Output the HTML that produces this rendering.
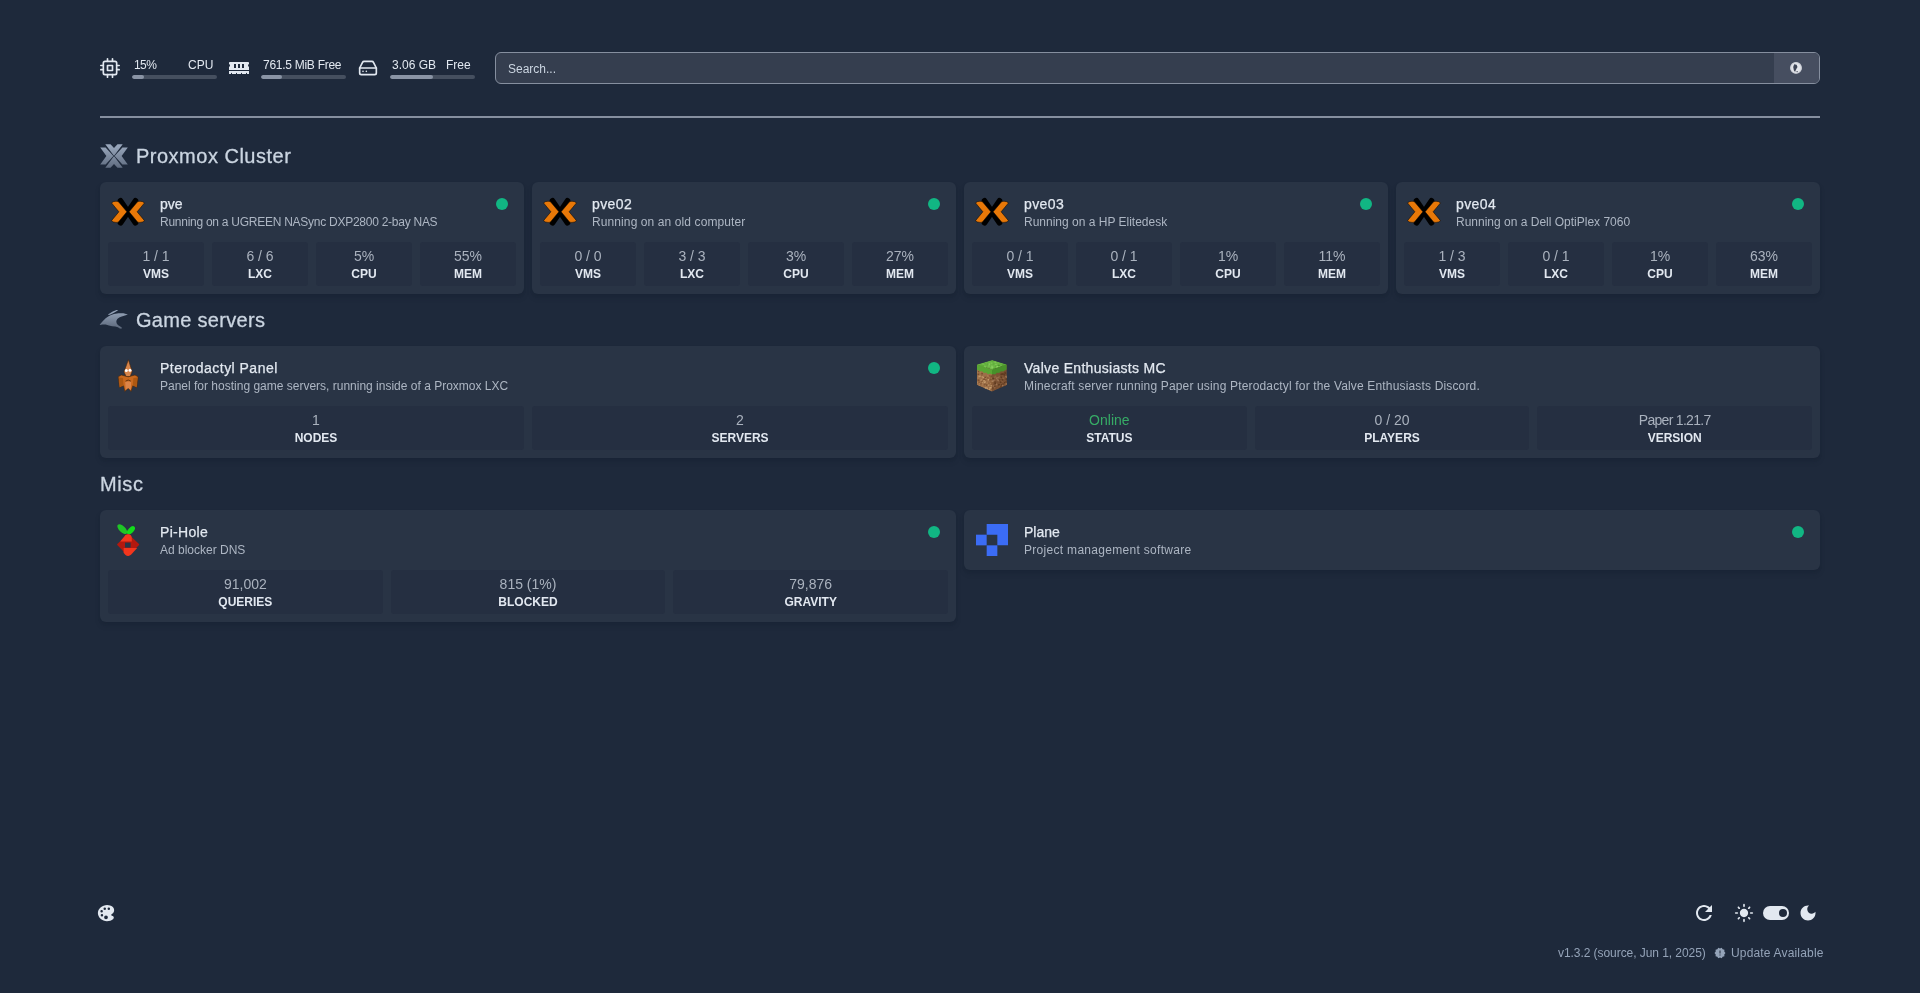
<!DOCTYPE html>
<html><head><meta charset="utf-8">
<style>
*{box-sizing:border-box;margin:0;padding:0}
html,body{will-change:transform;width:1920px;height:993px;overflow:hidden;background:#1e293b;font-family:"Liberation Sans",sans-serif;color:#e2e8f0}
.abs{position:absolute}
.res-ic{position:absolute;width:20px;height:20px}
.res-t{position:absolute;font-size:12px;line-height:16px;color:#e2e8f0;white-space:nowrap}
.bar{position:absolute;height:4px;border-radius:9999px;background:#454f5f;overflow:hidden}
.bar i{display:block;height:100%;background:#8a94a5;border-radius:9999px}
.search{position:absolute;left:495px;top:52px;width:1325px;height:32px;border:1px solid #868f9f;border-radius:6px;background:#353e4f;overflow:hidden}
.search .ph{position:absolute;left:12px;top:8px;font-size:12px;line-height:16px;color:#cbd5e1}
.search .btn{position:absolute;right:0;top:0;width:45px;height:100%;background:#464e60}
.hr{position:absolute;left:100px;top:116px;width:1720px;height:2px;background:#868f9f}
.gtitle{position:absolute;font-size:20px;line-height:28px;color:#cbd5e1;white-space:nowrap;-webkit-text-stroke:0.3px #cbd5e1}
.gicon{position:absolute;width:28px;height:28px}
.card{position:absolute;background:#293445;border-radius:6px;box-shadow:0 4px 6px -1px rgba(15,23,42,.2),0 2px 4px -2px rgba(15,23,42,.2)}
.card .ic{position:absolute;left:4px;top:4px;width:48px;height:52px;display:flex;align-items:center;justify-content:center}
.card .nm{position:absolute;left:60px;top:12px;font-size:14px;line-height:20px;color:#e2e8f0;white-space:nowrap;-webkit-text-stroke:0.25px #e2e8f0}
.card .ds{position:absolute;left:60px;top:32px;font-size:12px;line-height:16px;color:#adb6c3;white-space:nowrap}
.card .dot{position:absolute;right:16px;top:16px;width:12px;height:12px;border-radius:50%;background:#11b683}
.blocks{position:absolute;left:4px;right:4px;top:56px;display:flex}
.blk{flex:1;margin:4px;height:44px;background:#252f41;border-radius:3px;text-align:center;padding-top:4px}
.blk .v{font-size:14px;line-height:20px;color:#aab2be;white-space:nowrap}
.blk .l{font-size:12px;line-height:16px;font-weight:bold;color:#e2e8f0;text-transform:uppercase;white-space:nowrap}
.foot{position:absolute;font-size:12px;line-height:16px;color:#94a3b8;white-space:nowrap}
</style></head>
<body>
<!-- resources -->
<svg class="res-ic" style="left:100px;top:58px;width:20px;height:20px" viewBox="0 0 24 24" fill="none" stroke="#e2e8f0" stroke-width="2" stroke-linecap="round" stroke-linejoin="round"><rect x="4" y="4" width="16" height="16" rx="2"/><rect x="9" y="9" width="6" height="6"/><path d="M9 1v3M15 1v3M9 20v3M15 20v3M20 9h3M20 14h3M1 9h3M1 14h3"/></svg>
<div class="res-t" style="left:134px;top:57px;letter-spacing:-0.6px">15%</div>
<div class="res-t" style="left:188px;top:57px">CPU</div>
<div class="bar" style="left:132px;top:75px;width:85px"><i style="width:14%"></i></div>

<svg class="res-ic" style="left:229px;top:58px;width:20px;height:20px" viewBox="0 0 640 512" fill="#e2e8f0"><path d="M640 130.94V96c0-17.67-14.330-32-32-32H32C14.33 64 0 78.33 0 96v34.94c18.6 6.61 32 24.19 32 45.06s-13.4 38.45-32 45.06V320h640v-98.94c-18.6-6.61-32-24.19-32-45.06s13.4-38.45 32-45.06zM224 256h-64V128h64v128zm128 0h-64V128h64v128zm128 0h-64V128h64v128zM0 448h64v-26.67c0-8.84 7.16-16 16-16s16 7.160 16 16V448h128v-26.67c0-8.84 7.16-16 16-16s16 7.16 16 16V448h128v-26.67c0-8.840 7.16-16 16-16s16 7.16 16 16V448h128v-26.67c0-8.84 7.16-16 16-16s16 7.16 16 16V448h64v-96H0v96z"/></svg>
<div class="res-t" style="left:263px;top:57px;letter-spacing:-0.27px">761.5 MiB Free</div>
<div class="bar" style="left:261px;top:75px;width:85px"><i style="width:25%"></i></div>

<svg class="res-ic" style="left:358px;top:58px;width:20px;height:20px" viewBox="0 0 24 24" fill="none" stroke="#e2e8f0" stroke-width="2" stroke-linecap="round" stroke-linejoin="round"><path d="M22 12H2"/><path d="M5.45 5.11L2 12v6a2 2 0 0 0 2 2h16a2 2 0 0 0 2-2v-6l-3.45-6.89A2 2 0 0 0 16.76 4H7.24a2 2 0 0 0-1.79 1.11z"/><path d="M6 16h.01M10 16h.01"/></svg>
<div class="res-t" style="left:392px;top:57px">3.06 GB</div>
<div class="res-t" style="left:446px;top:57px">Free</div>
<div class="bar" style="left:390px;top:75px;width:85px"><i style="width:51%"></i></div>

<div class="search"><div class="ph">Search...</div><div class="btn"></div></div>
<div class="hr"></div>

<svg width="0" height="0" style="position:absolute">
<defs>
<linearGradient id="gg" gradientUnits="userSpaceOnUse" x1="0" y1="2" x2="0" y2="25"><stop offset="0" stop-color="#98a6bb"/><stop offset="1" stop-color="#5d697d"/></linearGradient>
<g id="pvshape">
<path d="M0.2 3.5H5.6L13.6 12L5.6 20.5H0.2L6.4 12Z"/>
<path d="M27.8 3.5H22.4L14.4 12L22.4 20.5H27.8L21.6 12Z"/>
</g>
<g id="pvx">
<path d="M14.5 8.8L29.5 30.8M29.5 8.8L14.5 30.8" stroke="#000" stroke-width="5.6" stroke-linecap="round"/>
<path fill="#e87808" stroke="#000" stroke-width="0.5" d="M5.5 10.9Q7.3 9.1 10.1 9.3Q11.6 9.4 12.5 9.8L20.9 19.8L12.5 29.9Q11.6 30.4 10.1 30.4Q7.3 30.5 5.5 28.7L12.9 19.8Z"/>
<path fill="#e87808" stroke="#000" stroke-width="0.5" d="M38.5 10.9Q36.7 9.1 33.9 9.3Q32.4 9.4 31.5 9.8L23.1 19.8L31.5 29.9Q32.4 30.4 33.9 30.4Q36.7 30.5 38.5 28.7L31.1 19.8Z"/>
</g>
<g id="pvgray" fill="url(#gg)">
<path d="M5.3 0.3H10.5L14 4.1L17.5 0.3H22.7L14.3 11.6H13.7Z"/>
<path d="M5.3 23.7H10.5L14 19.9L17.5 23.7H22.7L14.3 12.4H13.7Z"/>
<path d="M0.2 3.5H5.6L13.4 12L5.6 20.5H0.2L6.4 12Z"/>
<path d="M27.8 3.5H22.4L14.6 12L22.4 20.5H27.8L21.6 12Z"/>
</g>
<g id="ptgray" fill="url(#gg2)">
<path d="M3.87 20.60 L6.45 17.40 L9.67 14.20 L12.20 12.60 L14.50 11.30 L18.00 10.00 L22.60 9.20 L27.40 9.30 L30.00 10.00 L31.90 10.60 L29.00 11.60 L25.80 12.60 L23.20 13.50 L21.30 15.10 L20.30 17.10 L20.60 19.30 L21.90 20.90 L23.80 22.20 L25.80 23.50 L25.50 24.80 L23.80 24.50 L21.90 23.20 L19.30 22.60 L16.10 22.20 L12.90 21.60 L9.67 20.60 L6.45 20.60 L3.87 20.90Z"/>
<path d="M11.90 10.60 L16.80 7.40 L20.60 6.10 L22.20 6.00 L20.90 7.10 L18.00 8.70 L15.10 10.30 L13.00 11.00Z"/>
</g>
<linearGradient id="gg2" gradientUnits="userSpaceOnUse" x1="0" y1="6" x2="0" y2="25"><stop offset="0" stop-color="#9aa8bd"/><stop offset="1" stop-color="#5a6679"/></linearGradient>
<g id="ptero" stroke-linejoin="round">
<path fill="#c9691f" stroke="#4a2508" stroke-width="0.6" d="M10.2 24.8L13.3 23L20.2 24.8L27 23L30.1 24.8L28.8 35.4L24.8 33.7L23 39.4L20.2 36.3L16.8 39.4L15.5 33.7L11.5 35.4Z"/>
<path fill="#ad5812" d="M10.8 25.5L15 26L15.5 33.5L11.6 35Z M29.5 25.5L25.4 26L24.8 33.5L28.6 35Z"/>
<path fill="#dc8448" d="M17.2 29.5L23.2 29.5L22.8 38L20.2 36L17.6 38Z"/>
<path fill="none" stroke="#5a2e0c" stroke-width="0.9" d="M17.5 29.2Q20.2 26.8 22.9 29.2"/>
<path fill="#d8854a" stroke="#4a2508" stroke-width="0.6" d="M20.4 7.75L24.1 19.5L22.2 24.5L18.2 24.5L15.9 19.9Z"/>
<circle cx="18.3" cy="18.6" r="1.5" fill="#fff"/><circle cx="22" cy="18.3" r="1.5" fill="#fff"/>
</g>
<g id="mc">
<clipPath id="mcclip"><path d="M1 4.4L16.2 0L30.8 4.4V25L16 31.7L1 25Z"/></clipPath>
<g clip-path="url(#mcclip)">
<path fill="#6ab444" d="M1 4.4L16.2 0L30.8 4.4L16 9.5Z"/>
<path fill="#9d7049" d="M1 4.4L16 9.5V31.7L1 25Z"/>
<path fill="#7b5133" d="M16 9.5L30.8 4.4V25L16 31.7Z"/>
<rect x="4.6" y="19.4" width="1.6" height="1.6" fill="#c49a6c"/><rect x="14.7" y="21.9" width="1.6" height="1.6" fill="#a87a50"/><rect x="2.0" y="11.1" width="1.6" height="1.6" fill="#7a4e2e"/><rect x="4.9" y="15.2" width="1.6" height="1.6" fill="#7a4e2e"/><rect x="9.1" y="21.0" width="1.6" height="1.6" fill="#7a4e2e"/><rect x="10.6" y="15.9" width="1.6" height="1.6" fill="#8a5c38"/><rect x="14.0" y="22.3" width="1.6" height="1.6" fill="#b58a5e"/><rect x="11.1" y="14.9" width="1.6" height="1.6" fill="#a87a50"/><rect x="1.6" y="21.7" width="1.6" height="1.6" fill="#c49a6c"/><rect x="8.1" y="23.1" width="1.6" height="1.6" fill="#7a4e2e"/><rect x="11.7" y="27.1" width="1.6" height="1.6" fill="#7a4e2e"/><rect x="11.9" y="22.4" width="1.6" height="1.6" fill="#8a5c38"/><rect x="14.2" y="16.4" width="1.6" height="1.6" fill="#8a5c38"/><rect x="8.4" y="16.7" width="1.6" height="1.6" fill="#7a4e2e"/><rect x="12.7" y="26.5" width="1.6" height="1.6" fill="#7a4e2e"/><rect x="8.6" y="18.6" width="1.6" height="1.6" fill="#c49a6c"/><rect x="9.0" y="19.0" width="1.6" height="1.6" fill="#8a5c38"/><rect x="14.6" y="24.7" width="1.6" height="1.6" fill="#b58a5e"/><rect x="13.8" y="28.8" width="1.6" height="1.6" fill="#8a5c38"/><rect x="11.5" y="18.7" width="1.6" height="1.6" fill="#a87a50"/><rect x="14.6" y="23.2" width="1.6" height="1.6" fill="#8a5c38"/><rect x="10.5" y="27.6" width="1.6" height="1.6" fill="#c49a6c"/><rect x="5.3" y="12.9" width="1.6" height="1.6" fill="#7a4e2e"/><rect x="2.3" y="22.2" width="1.6" height="1.6" fill="#7a4e2e"/><rect x="14.5" y="15.4" width="1.6" height="1.6" fill="#7a4e2e"/><rect x="12.5" y="26.7" width="1.6" height="1.6" fill="#b58a5e"/><rect x="10.1" y="24.3" width="1.6" height="1.6" fill="#7a4e2e"/><rect x="11.8" y="18.9" width="1.6" height="1.6" fill="#c49a6c"/><rect x="8.6" y="27.1" width="1.6" height="1.6" fill="#c49a6c"/><rect x="1.1" y="12.1" width="1.6" height="1.6" fill="#a87a50"/><rect x="1.5" y="13.5" width="1.6" height="1.6" fill="#7a4e2e"/><rect x="5.4" y="15.8" width="1.6" height="1.6" fill="#b58a5e"/><rect x="15.7" y="20.3" width="1.6" height="1.6" fill="#c49a6c"/><rect x="15.4" y="28.0" width="1.6" height="1.6" fill="#7a4e2e"/><rect x="6.7" y="24.7" width="1.6" height="1.6" fill="#7a4e2e"/><rect x="10.7" y="22.2" width="1.6" height="1.6" fill="#a87a50"/><rect x="2.5" y="24.7" width="1.6" height="1.6" fill="#a87a50"/><rect x="5.1" y="20.8" width="1.6" height="1.6" fill="#8a5c38"/><rect x="15.0" y="21.5" width="1.6" height="1.6" fill="#c49a6c"/><rect x="8.8" y="20.9" width="1.6" height="1.6" fill="#b58a5e"/><rect x="12.8" y="28.4" width="1.6" height="1.6" fill="#c49a6c"/><rect x="1.3" y="19.3" width="1.6" height="1.6" fill="#8a5c38"/><rect x="1.9" y="19.7" width="1.6" height="1.6" fill="#7a4e2e"/><rect x="6.3" y="25.2" width="1.6" height="1.6" fill="#a87a50"/><rect x="11.6" y="24.5" width="1.6" height="1.6" fill="#b58a5e"/><rect x="9.8" y="27.0" width="1.6" height="1.6" fill="#b58a5e"/><rect x="15.4" y="19.0" width="1.6" height="1.6" fill="#7a4e2e"/><rect x="5.5" y="20.5" width="1.6" height="1.6" fill="#8a5c38"/><rect x="6.5" y="16.8" width="1.6" height="1.6" fill="#c49a6c"/><rect x="13.7" y="18.6" width="1.6" height="1.6" fill="#7a4e2e"/><rect x="2.6" y="22.5" width="1.6" height="1.6" fill="#a87a50"/><rect x="11.3" y="15.9" width="1.6" height="1.6" fill="#a87a50"/><rect x="4.3" y="23.0" width="1.6" height="1.6" fill="#8a5c38"/><rect x="5.9" y="21.8" width="1.6" height="1.6" fill="#b58a5e"/><rect x="2.5" y="15.6" width="1.6" height="1.6" fill="#c49a6c"/><rect x="11.1" y="17.2" width="1.6" height="1.6" fill="#8a5c38"/><rect x="2.2" y="21.4" width="1.6" height="1.6" fill="#8a5c38"/><rect x="14.3" y="21.4" width="1.6" height="1.6" fill="#8a5c38"/><rect x="12.8" y="15.1" width="1.6" height="1.6" fill="#8a5c38"/><rect x="5.7" y="23.9" width="1.6" height="1.6" fill="#a87a50"/><rect x="3.8" y="15.4" width="1.6" height="1.6" fill="#b58a5e"/><rect x="13.1" y="19.5" width="1.6" height="1.6" fill="#8a5c38"/><rect x="7.3" y="20.0" width="1.6" height="1.6" fill="#c49a6c"/><rect x="8.0" y="21.8" width="1.6" height="1.6" fill="#c49a6c"/><rect x="7.3" y="18.5" width="1.6" height="1.6" fill="#7a4e2e"/><rect x="3.3" y="11.4" width="1.6" height="1.6" fill="#a87a50"/><rect x="15.8" y="21.7" width="1.6" height="1.6" fill="#8a5c38"/><rect x="1.5" y="17.1" width="1.6" height="1.6" fill="#a87a50"/><rect x="15.5" y="23.1" width="1.6" height="1.6" fill="#8a5c38"/><rect x="13.9" y="27.0" width="1.6" height="1.6" fill="#c49a6c"/><rect x="17.8" y="19.2" width="1.6" height="1.6" fill="#8e6240"/><rect x="29.4" y="21.0" width="1.6" height="1.6" fill="#6a4226"/><rect x="29.3" y="23.9" width="1.6" height="1.6" fill="#8e6240"/><rect x="16.2" y="27.3" width="1.6" height="1.6" fill="#6a4226"/><rect x="23.4" y="16.9" width="1.6" height="1.6" fill="#8e6240"/><rect x="23.8" y="19.3" width="1.6" height="1.6" fill="#8e6240"/><rect x="21.1" y="18.0" width="1.6" height="1.6" fill="#5e3a20"/><rect x="28.0" y="12.5" width="1.6" height="1.6" fill="#6a4226"/><rect x="18.9" y="23.0" width="1.6" height="1.6" fill="#8e6240"/><rect x="18.5" y="27.0" width="1.6" height="1.6" fill="#6a4226"/><rect x="28.2" y="11.7" width="1.6" height="1.6" fill="#5e3a20"/><rect x="16.7" y="20.0" width="1.6" height="1.6" fill="#9c7150"/><rect x="25.1" y="20.2" width="1.6" height="1.6" fill="#8e6240"/><rect x="23.0" y="24.9" width="1.6" height="1.6" fill="#8e6240"/><rect x="28.7" y="22.4" width="1.6" height="1.6" fill="#8e6240"/><rect x="17.8" y="16.5" width="1.6" height="1.6" fill="#8e6240"/><rect x="28.6" y="12.6" width="1.6" height="1.6" fill="#5e3a20"/><rect x="20.7" y="19.1" width="1.6" height="1.6" fill="#9c7150"/><rect x="21.7" y="19.7" width="1.6" height="1.6" fill="#9c7150"/><rect x="21.3" y="17.0" width="1.6" height="1.6" fill="#9c7150"/><rect x="22.3" y="15.7" width="1.6" height="1.6" fill="#8e6240"/><rect x="26.6" y="17.6" width="1.6" height="1.6" fill="#8e6240"/><rect x="24.4" y="13.6" width="1.6" height="1.6" fill="#5e3a20"/><rect x="24.9" y="24.1" width="1.6" height="1.6" fill="#5e3a20"/><rect x="25.4" y="13.3" width="1.6" height="1.6" fill="#5e3a20"/><rect x="16.8" y="25.3" width="1.6" height="1.6" fill="#9c7150"/><rect x="22.2" y="24.0" width="1.6" height="1.6" fill="#5e3a20"/><rect x="16.3" y="19.4" width="1.6" height="1.6" fill="#9c7150"/><rect x="26.3" y="13.3" width="1.6" height="1.6" fill="#5e3a20"/><rect x="19.3" y="16.9" width="1.6" height="1.6" fill="#8e6240"/><rect x="29.9" y="16.3" width="1.6" height="1.6" fill="#9c7150"/><rect x="17.8" y="25.8" width="1.6" height="1.6" fill="#5e3a20"/><rect x="25.9" y="23.0" width="1.6" height="1.6" fill="#8e6240"/><rect x="28.0" y="21.9" width="1.6" height="1.6" fill="#5e3a20"/><rect x="18.1" y="26.9" width="1.6" height="1.6" fill="#8e6240"/><rect x="23.8" y="21.4" width="1.6" height="1.6" fill="#5e3a20"/><rect x="18.7" y="15.5" width="1.6" height="1.6" fill="#8e6240"/><rect x="16.4" y="17.8" width="1.6" height="1.6" fill="#5e3a20"/><rect x="28.4" y="25.1" width="1.6" height="1.6" fill="#9c7150"/><rect x="27.8" y="12.2" width="1.6" height="1.6" fill="#6a4226"/><rect x="17.6" y="26.8" width="1.6" height="1.6" fill="#8e6240"/><rect x="24.1" y="25.7" width="1.6" height="1.6" fill="#6a4226"/><rect x="28.3" y="15.0" width="1.6" height="1.6" fill="#6a4226"/><rect x="25.6" y="19.1" width="1.6" height="1.6" fill="#5e3a20"/><rect x="19.7" y="23.7" width="1.6" height="1.6" fill="#9c7150"/><rect x="24.2" y="27.1" width="1.6" height="1.6" fill="#5e3a20"/><rect x="23.4" y="27.6" width="1.6" height="1.6" fill="#5e3a20"/><rect x="28.5" y="25.2" width="1.6" height="1.6" fill="#5e3a20"/><rect x="26.2" y="23.2" width="1.6" height="1.6" fill="#5e3a20"/><rect x="18.3" y="21.3" width="1.6" height="1.6" fill="#6a4226"/><rect x="18.4" y="22.7" width="1.6" height="1.6" fill="#5e3a20"/><rect x="29.6" y="18.4" width="1.6" height="1.6" fill="#5e3a20"/><rect x="24.7" y="25.3" width="1.6" height="1.6" fill="#6a4226"/><rect x="20.0" y="17.6" width="1.6" height="1.6" fill="#9c7150"/><rect x="29.8" y="23.0" width="1.6" height="1.6" fill="#9c7150"/><rect x="25.9" y="24.8" width="1.6" height="1.6" fill="#9c7150"/><rect x="29.2" y="15.6" width="1.6" height="1.6" fill="#9c7150"/><rect x="23.1" y="19.1" width="1.6" height="1.6" fill="#6a4226"/><rect x="24.4" y="16.5" width="1.6" height="1.6" fill="#5e3a20"/><rect x="27.5" y="13.9" width="1.6" height="1.6" fill="#5e3a20"/><rect x="14.7" y="2.4" width="1.8" height="1.4" fill="#7cc653"/><rect x="19.0" y="6.0" width="1.8" height="1.4" fill="#5fae3a"/><rect x="26.0" y="5.5" width="1.8" height="1.4" fill="#7cc653"/><rect x="11.5" y="3.5" width="1.8" height="1.4" fill="#4e9a2c"/><rect x="22.4" y="5.5" width="1.8" height="1.4" fill="#7cc653"/><rect x="28.2" y="4.5" width="1.8" height="1.4" fill="#4e9a2c"/><rect x="26.0" y="4.4" width="1.8" height="1.4" fill="#4e9a2c"/><rect x="14.3" y="7.2" width="1.8" height="1.4" fill="#7cc653"/><rect x="18.5" y="1.7" width="1.8" height="1.4" fill="#7cc653"/><rect x="12.0" y="5.2" width="1.8" height="1.4" fill="#7cc653"/><rect x="6.7" y="5.2" width="1.8" height="1.4" fill="#8ad35f"/><rect x="8.2" y="6.5" width="1.8" height="1.4" fill="#8ad35f"/><rect x="6.1" y="6.1" width="1.8" height="1.4" fill="#5fae3a"/><rect x="7.9" y="3.1" width="1.8" height="1.4" fill="#5fae3a"/><rect x="15.0" y="5.5" width="1.8" height="1.4" fill="#7cc653"/><rect x="15.6" y="0.9" width="1.8" height="1.4" fill="#5fae3a"/><rect x="15.8" y="8.4" width="1.8" height="1.4" fill="#8ad35f"/><rect x="16.4" y="8.8" width="1.8" height="1.4" fill="#8ad35f"/><rect x="16.8" y="3.3" width="1.8" height="1.4" fill="#5fae3a"/><rect x="15.5" y="6.5" width="1.8" height="1.4" fill="#8ad35f"/><rect x="16.6" y="8.7" width="1.8" height="1.4" fill="#8ad35f"/><rect x="19.2" y="4.2" width="1.8" height="1.4" fill="#7cc653"/><rect x="18.7" y="4.1" width="1.8" height="1.4" fill="#7cc653"/><rect x="22.0" y="4.7" width="1.8" height="1.4" fill="#4e9a2c"/><rect x="21.6" y="5.3" width="1.8" height="1.4" fill="#4e9a2c"/><rect x="16.9" y="8.2" width="1.8" height="1.4" fill="#5fae3a"/><rect x="16.7" y="8.6" width="1.8" height="1.4" fill="#4e9a2c"/><rect x="24.5" y="3.6" width="1.8" height="1.4" fill="#5fae3a"/><rect x="19.0" y="5.3" width="1.8" height="1.4" fill="#5fae3a"/><rect x="19.9" y="6.3" width="1.8" height="1.4" fill="#7cc653"/><rect x="5.3" y="4.9" width="1.8" height="1.4" fill="#5fae3a"/><rect x="10.4" y="4.2" width="1.8" height="1.4" fill="#5fae3a"/><rect x="3.8" y="4.9" width="1.8" height="1.4" fill="#5fae3a"/><rect x="12.3" y="3.4" width="1.8" height="1.4" fill="#8ad35f"/><rect x="28.3" y="5.4" width="1.8" height="1.4" fill="#5fae3a"/><rect x="20.7" y="6.0" width="1.8" height="1.4" fill="#8ad35f"/><rect x="23.3" y="7.3" width="1.8" height="1.4" fill="#4e9a2c"/><rect x="6.6" y="3.7" width="1.8" height="1.4" fill="#7cc653"/><rect x="23.0" y="6.6" width="1.8" height="1.4" fill="#7cc653"/><rect x="6.6" y="4.6" width="1.8" height="1.4" fill="#5fae3a"/>
<path fill="#59a634" d="M1 4.4L16 9.5V14.5L14 13.5L12 14.2L10 12.6L8 13L6 11.2L4 11.6L2.5 10L1 10.2Z"/>
<path fill="#47902a" d="M16 9.5L30.8 4.4V9.6L29 10.2L27 11.5L25 11.2L23 13L21 12.8L19 14.5L17.5 14L16 14.5Z"/>
</g></g>
<g id="pihole">
<ellipse cx="10.3" cy="5.1" rx="3.1" ry="6.2" transform="rotate(-45 10.3 5.1)" fill="#1fc526"/>
<ellipse cx="18.9" cy="6.3" rx="2.7" ry="5" transform="rotate(45 18.9 6.3)" fill="#12dc1a"/>
<path fill="#b3190f" stroke="#b3190f" stroke-width="2.2" stroke-linejoin="round" d="M16.2 11.4L26 20.6L16.2 30.8L6.3 20.6Z"/>
<path fill="#f2361d" d="M15.5 10.3C18.2 10 19.8 11.6 19.8 14.2V17.4H8.2L12.5 12.2C13.3 11 14.3 10.4 15.5 10.3Z"/>
<path fill="#f2361d" d="M11.6 24.1H25.2L19 30.8C17.5 32.3 15 32.3 13.5 30.9L11.6 28.8Z"/>
<rect x="13" y="18.6" width="5.6" height="5" fill="#2a3446"/>
</g>
<g id="plane" fill="#3b6cf5">
<rect x="0" y="10.67" width="10.67" height="10.67"/>
<path d="M10.67 0H32V21.33H21.33V10.67H10.67Z"/>
<rect x="10.67" y="21.33" width="10.67" height="10.67"/>
</g>
</defs></svg>
<svg class="abs" style="left:1790px;top:62px" width="12" height="12" viewBox="0 0 12 12"><circle cx="6" cy="5.9" r="5.9" fill="#e4e6eb"/><circle cx="6" cy="5.9" r="5.2" fill="none" stroke="#b9bdc7" stroke-width="0.5"/><path d="M4.15 2.2L6.6 2.7L7.5 4.9L6.6 6.6L5.6 8.5L5.1 10L3.9 8.5L3.2 4.9Z" fill="#3e4556"/><circle cx="7.1" cy="9.6" r="0.7" fill="#3e4556"/></svg>
<svg class="abs" style="left:100px;top:144px" width="28" height="24" viewBox="0 0 28 24"><use href="#pvgray"/></svg>
<div class="gtitle" style="left:136px;top:142px;letter-spacing:0.5px">Proxmox Cluster</div>
<svg class="abs" style="left:96px;top:304px" width="36" height="32" viewBox="0 0 36 32"><use href="#ptgray"/></svg>
<div class="gtitle" style="left:136px;top:306px;letter-spacing:0.3px">Game servers</div>
<div class="gtitle" style="left:100px;top:470px;letter-spacing:0.6px">Misc</div>
<div class="card" style="left:100px;top:182px;width:424px;height:112px"><div class="ic"><svg style="position:absolute;left:2px;top:6px" width="44" height="40" viewBox="0 0 44 40"><use href="#pvx"/></svg></div><div class="nm">pve</div><div class="ds" style="letter-spacing:-0.26px">Running on a UGREEN NASync DXP2800 2-bay NAS</div><div class="dot"></div><div class="blocks"><div class="blk"><div class="v">1 / 1</div><div class="l">VMS</div></div><div class="blk"><div class="v">6 / 6</div><div class="l">LXC</div></div><div class="blk"><div class="v">5%</div><div class="l">CPU</div></div><div class="blk"><div class="v">55%</div><div class="l">MEM</div></div></div></div>
<div class="card" style="left:532px;top:182px;width:424px;height:112px"><div class="ic"><svg style="position:absolute;left:2px;top:6px" width="44" height="40" viewBox="0 0 44 40"><use href="#pvx"/></svg></div><div class="nm" style="letter-spacing:0.4px">pve02</div><div class="ds" style="letter-spacing:0.1px">Running on an old computer</div><div class="dot"></div><div class="blocks"><div class="blk"><div class="v">0 / 0</div><div class="l">VMS</div></div><div class="blk"><div class="v">3 / 3</div><div class="l">LXC</div></div><div class="blk"><div class="v">3%</div><div class="l">CPU</div></div><div class="blk"><div class="v">27%</div><div class="l">MEM</div></div></div></div>
<div class="card" style="left:964px;top:182px;width:424px;height:112px"><div class="ic"><svg style="position:absolute;left:2px;top:6px" width="44" height="40" viewBox="0 0 44 40"><use href="#pvx"/></svg></div><div class="nm" style="letter-spacing:0.4px">pve03</div><div class="ds">Running on a HP Elitedesk</div><div class="dot"></div><div class="blocks"><div class="blk"><div class="v">0 / 1</div><div class="l">VMS</div></div><div class="blk"><div class="v">0 / 1</div><div class="l">LXC</div></div><div class="blk"><div class="v">1%</div><div class="l">CPU</div></div><div class="blk"><div class="v">11%</div><div class="l">MEM</div></div></div></div>
<div class="card" style="left:1396px;top:182px;width:424px;height:112px"><div class="ic"><svg style="position:absolute;left:2px;top:6px" width="44" height="40" viewBox="0 0 44 40"><use href="#pvx"/></svg></div><div class="nm" style="letter-spacing:0.4px">pve04</div><div class="ds">Running on a Dell OptiPlex 7060</div><div class="dot"></div><div class="blocks"><div class="blk"><div class="v">1 / 3</div><div class="l">VMS</div></div><div class="blk"><div class="v">0 / 1</div><div class="l">LXC</div></div><div class="blk"><div class="v">1%</div><div class="l">CPU</div></div><div class="blk"><div class="v">63%</div><div class="l">MEM</div></div></div></div>
<div class="card" style="left:100px;top:346px;width:856px;height:112px"><div class="ic"><svg style="position:absolute;left:4px;top:2px" width="40" height="44" viewBox="0 0 40 44"><use href="#ptero"/></svg></div><div class="nm" style="letter-spacing:0.47px">Pterodactyl Panel</div><div class="ds">Panel for hosting game servers, running inside of a Proxmox LXC</div><div class="dot"></div><div class="blocks"><div class="blk"><div class="v">1</div><div class="l">NODES</div></div><div class="blk"><div class="v">2</div><div class="l">SERVERS</div></div></div></div>
<div class="card" style="left:964px;top:346px;width:856px;height:112px"><div class="ic"><svg width="32" height="32" viewBox="0 0 32 32"><use href="#mc"/></svg></div><div class="nm" style="letter-spacing:0.3px">Valve Enthusiasts MC</div><div class="ds" style="letter-spacing:0.16px">Minecraft server running Paper using Pterodactyl for the Valve Enthusiasts Discord.</div><div class="blocks"><div class="blk"><div class="v" style="color:#36ab66">Online</div><div class="l">STATUS</div></div><div class="blk"><div class="v">0 / 20</div><div class="l">PLAYERS</div></div><div class="blk"><div class="v" style="letter-spacing:-0.7px">Paper 1.21.7</div><div class="l">VERSION</div></div></div></div>
<div class="card" style="left:100px;top:510px;width:856px;height:112px"><div class="ic"><svg width="32" height="32" viewBox="0 0 32 32"><use href="#pihole"/></svg></div><div class="nm" style="letter-spacing:0.3px">Pi-Hole</div><div class="ds">Ad blocker DNS</div><div class="dot"></div><div class="blocks"><div class="blk"><div class="v">91,002</div><div class="l">QUERIES</div></div><div class="blk"><div class="v">815 (1%)</div><div class="l">BLOCKED</div></div><div class="blk"><div class="v">79,876</div><div class="l">GRAVITY</div></div></div></div>
<div class="card" style="left:964px;top:510px;width:856px;height:60px"><div class="ic"><svg width="32" height="32" viewBox="0 0 32 32"><use href="#plane"/></svg></div><div class="nm">Plane</div><div class="ds" style="letter-spacing:0.3px">Project management software</div><div class="dot"></div></div>
<svg class="abs" style="left:96px;top:903px" width="20" height="20" viewBox="0 0 512 512" fill="#e2e8f0"><path d="M441 336.2l-.06-.05c-9.93-9.18-22.78-11.34-32.16-12.92l-.69-.12c-9.05-1.49-10.48-2.5-14.58-6.17-2.44-2.17-5.35-5.65-5.35-9.94s2.91-7.77 5.34-9.94l30.28-26.87c25.92-22.91 40.2-53.66 40.2-86.59s-14.25-63.68-40.2-86.6c-35.89-31.59-85-49-138.37-49C223.72 48 162 71.37 116 112.11c-43.87 38.77-68 90.71-68 146.24s24.16 107.47 68 146.23c21.75 19.24 47.49 34.18 76.52 44.42a266.17 266.17 0 0086.87 15h1.81c61 0 119.09-20.57 159.39-56.4 9.7-8.56 15.15-20.83 15.34-34.56.21-14.17-5.37-27.95-14.93-36.84zM112 208a32 32 0 1132 32 32 32 0 01-32-32zm40 135a32 32 0 1132-32 32 32 0 01-32 32zm40-199a32 32 0 1132 32 32 32 0 01-32-32zm64 271a48 48 0 1148-48 48 48 0 01-48 48zm72-239a32 32 0 1132-32 32 32 0 01-32 32z"/></svg>
<svg class="abs" style="left:1692px;top:901px" width="24" height="24" viewBox="0 0 24 24" fill="#e2e8f0"><path d="M17.65 6.35C16.2 4.9 14.21 4 12 4c-4.42 0-7.99 3.58-7.99 8s3.57 8 7.99 8c3.73 0 6.84-2.55 7.73-6h-2.08c-.82 2.33-3.04 4-5.65 4-3.31 0-6-2.69-6-6s2.69-6 6-6c1.66 0 3.14.69 4.22 1.78L13 11h7V4l-2.35 2.35z"/></svg>
<svg class="abs" style="left:1734px;top:903px" width="20" height="20" viewBox="0 0 24 24" fill="#e2e8f0"><path d="M12 7c-2.76 0-5 2.24-5 5s2.240 5 5 5 5-2.24 5-5-2.24-5-5-5zM2 13h2c.55 0 1-.45 1-1s-.45-1-1-1H2c-.55 0-1 .45-1 1s.45 1 1 1zm18 0h2c.55 0 1-.45 1-1s-.45-1-1-1h-2c-.55 0-1 .45-1 1s.45 1 1 1zM11 2v2c0 .55.45 1 1 1s1-.45 1-1V2c0-.55-.45-1-1-1s-1 .45-1 1zm0 18v2c0 .55.45 1 1 1s1-.45 1-1v-2c0-.55-.45-1-1-1s-1 .45-1 1zM5.99 4.58c-.39-.39-1.03-.39-1.41 0-.39.39-.39 1.03 0 1.41l1.06 1.06c.39.39 1.03.39 1.41 0s.39-1.03 0-1.41L5.99 4.58zm12.37 12.37c-.39-.39-1.03-.39-1.41 0-.39.39-.39 1.03 0 1.41l1.06 1.06c.39.39 1.03.39 1.41 0 .39-.39.39-1.03 0-1.41l-1.06-1.06zm1.06-10.96c.39-.39.39-1.03 0-1.41-.39-.39-1.03-.39-1.41 0l-1.06 1.06c-.39.39-.39 1.03 0 1.41s1.03.39 1.41 0l1.06-1.06zM7.05 18.36c.39-.39.39-1.03 0-1.41-.39-.39-1.03-.39-1.41 0l-1.06 1.06c-.39.39-.39 1.03 0 1.41s1.03.39 1.41 0l1.06-1.06z"/></svg>
<div class="abs" style="left:1763px;top:906px;width:26px;height:14px;border-radius:7px;background:#e2e8f0"><div class="abs" style="left:16px;top:3px;width:8px;height:8px;border-radius:50%;background:#1e293b"></div></div>
<svg class="abs" style="left:1798px;top:903px" width="20" height="20" viewBox="0 0 24 24" fill="#e2e8f0"><path d="M12 3c-4.97 0-9 4.03-9 9s4.03 9 9 9 9-4.03 9-9c0-.46-.04-.92-.1-1.36-.98 1.37-2.58 2.26-4.4 2.26-2.98 0-5.4-2.42-5.4-5.4 0-1.81.89-3.42 2.260-4.4-.44-.06-.9-.1-1.36-.1z"/></svg>
<div class="foot" style="left:1558px;top:945px;letter-spacing:-0.06px">v1.3.2 (source, Jun 1, 2025)</div>
<svg class="abs" style="left:1714px;top:947px" width="12" height="12" viewBox="0 0 24 24" fill="#94a3b8"><path d="M23 12l-2.44-2.79.34-3.69-3.61-.82-1.89-3.2L12 2.96 8.6 1.5 6.71 4.69 3.1 5.5l.34 3.7L1 12l2.44 2.79-.34 3.7 3.61.82L8.6 22.5l3.4-1.47 3.4 1.46 1.89-3.19 3.61-.82-.34-3.69L23 12zm-10 5h-2v-2h2v2zm0-4h-2V7h2v6z"/></svg>
<div class="foot" style="left:1731px;top:945px;letter-spacing:0.17px">Update Available</div>

</body></html>
